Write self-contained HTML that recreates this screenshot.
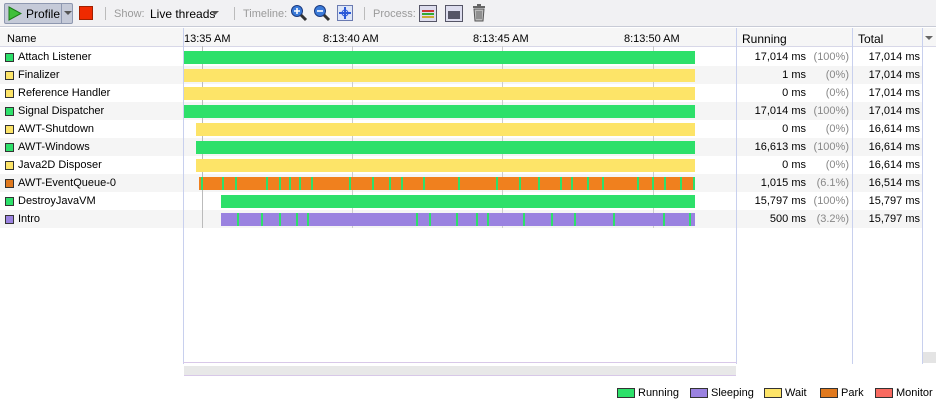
<!DOCTYPE html>
<html><head><style>
*{margin:0;padding:0;box-sizing:border-box}
body{width:936px;height:410px;background:#fff;font-family:"Liberation Sans",sans-serif;font-size:11px;color:#000;position:relative;overflow:hidden}
.a{position:absolute}
.tb{left:0;top:0;width:936px;height:27px;background:#f1f1f3;border-bottom:1px solid #c8cbd6}
.g{color:#9a9a9a}
.sep{width:1px;height:13px;background:#bbb;top:7px}
.row{left:0;width:922px;height:18px}
.alt{background:#f5f5f5}
.sq{width:9px;height:9px;border:1px solid #333;left:5px;top:5px}
.nm{left:18px;top:3px}
.bar{height:13px;top:3px}
.num{top:3px;text-align:right}
.pct{top:3px;text-align:right;color:#888}
.vl{width:1px;background:#c8d0ee}
.lg{top:388px;height:10px;width:18px;border:1px solid #333}
.lt{top:387px;font-size:11px}
</style></head><body>
<div class="a tb"></div>
<div class="a" style="left:4px;top:3px;width:69px;height:21px;border:1px solid #8e98b0;background:#c5cad8;border-radius:2px"></div>
<svg class="a" style="left:8px;top:6px" width="14" height="15"><polygon points="1,1 13,7.5 1,14" fill="#3fc03a" stroke="#1d7a1a"/></svg>
<div class="a" style="left:26px;top:7px;font-size:12px">Profile</div>
<div class="a" style="left:61px;top:4px;width:1px;height:19px;background:#8e98b0"></div>
<div class="a" style="left:64px;top:11px;border:4px solid transparent;border-top:4px solid #555;border-bottom:0"></div>
<div class="a" style="left:79px;top:6px;width:14px;height:14px;background:#f02a00;border:1px solid #a02000"></div>
<div class="a sep" style="left:105px"></div>
<div class="a g" style="left:114px;top:8px">Show:</div>
<div class="a" style="left:150px;top:7px;font-size:12px">Live threads</div>
<div class="a" style="left:211px;top:11px;border:4px solid transparent;border-top:4px solid #555;border-bottom:0"></div>
<div class="a sep" style="left:234px"></div>
<div class="a g" style="left:243px;top:8px">Timeline:</div>
<svg class="a" style="left:290px;top:4px" width="18" height="18"><circle cx="7" cy="7" r="5.5" fill="#3a7ad8" stroke="#1a3a80"/><line x1="11" y1="11" x2="16" y2="16" stroke="#333" stroke-width="3"/><path d="M4 7h6M7 4v6" stroke="#fff" stroke-width="1.6"/></svg>
<svg class="a" style="left:313px;top:4px" width="18" height="18"><circle cx="7" cy="7" r="5.5" fill="#3a7ad8" stroke="#1a3a80"/><line x1="11" y1="11" x2="16" y2="16" stroke="#333" stroke-width="3"/><path d="M4 7h6" stroke="#fff" stroke-width="1.6"/></svg>
<svg class="a" style="left:337px;top:5px" width="16" height="16"><rect x="0.5" y="0.5" width="15" height="15" fill="#dde6f8" stroke="#6a7ab0"/><path d="M8 2v12M2 8h12" stroke="#2a5ad8" stroke-width="2"/><circle cx="8" cy="8" r="3" fill="none" stroke="#2a5ad8"/></svg>
<div class="a sep" style="left:364px"></div>
<div class="a g" style="left:373px;top:8px">Process:</div>
<svg class="a" style="left:419px;top:5px" width="18" height="17"><rect x="0.5" y="0.5" width="17" height="16" fill="#dde" stroke="#556"/><rect x="3" y="5" width="12" height="2" fill="#c33"/><rect x="3" y="8" width="12" height="2" fill="#3a3"/><rect x="3" y="11" width="12" height="2" fill="#ca3"/></svg>
<svg class="a" style="left:445px;top:5px" width="18" height="17"><rect x="0.5" y="0.5" width="17" height="16" fill="#dde" stroke="#556"/><rect x="3" y="6" width="12" height="8" fill="#556"/></svg>
<svg class="a" style="left:472px;top:4px" width="14" height="18"><rect x="1" y="2" width="12" height="2" fill="#666"/><rect x="5" y="0" width="4" height="2" fill="#666"/><path d="M2 5h10l-1 12H3z" fill="#bbb" stroke="#555"/><path d="M5 7v8M7 7v8M9 7v8" stroke="#666"/></svg>

<div class="a" style="left:0;top:28px;width:936px;height:19px;background:#f6f6f6;border-bottom:1px solid #d8d8e8"></div>
<div class="a" style="left:7px;top:33px">Name</div>
<div class="a" style="left:184px;top:33px">13:35 AM</div>
<div class="a" style="left:323px;top:33px">8:13:40 AM</div>
<div class="a" style="left:473px;top:33px">8:13:45 AM</div>
<div class="a" style="left:624px;top:33px">8:13:50 AM</div>
<div class="a" style="left:742px;top:32px;font-size:12px">Running</div>
<div class="a" style="left:858px;top:32px;font-size:12px">Total</div>
<div class="a" style="left:925px;top:36px;border:4px solid transparent;border-top:4px solid #666;border-bottom:0"></div>

<div class="a alt" style="left:0;top:66px;width:922px;height:18px"></div>
<div class="a alt" style="left:0;top:102px;width:922px;height:18px"></div>
<div class="a alt" style="left:0;top:138px;width:922px;height:18px"></div>
<div class="a alt" style="left:0;top:174px;width:922px;height:18px"></div>
<div class="a alt" style="left:0;top:210px;width:922px;height:18px"></div>

<div class="a vl" style="left:183px;top:28px;height:336px"></div>
<div class="a vl" style="left:736px;top:28px;height:336px"></div>
<div class="a vl" style="left:852px;top:28px;height:336px"></div>
<div class="a vl" style="left:922px;top:28px;height:336px"></div>
<div class="a" style="left:183px;top:362px;width:554px;height:1px;background:#d8c8e8"></div>
<div class="a" style="left:202px;top:46px;width:1px;height:182px;background:#bbb"></div>
<div class="a" style="left:352px;top:46px;width:1px;height:182px;background:#ccc"></div>
<div class="a" style="left:502px;top:46px;width:1px;height:182px;background:#ccc"></div>
<div class="a" style="left:653px;top:46px;width:1px;height:182px;background:#ccc"></div>
<div class="a" style="left:184px;top:366px;width:552px;height:10px;background:#e8e8e8;border-bottom:1px solid #d8c8e8"></div>
<div class="a" style="left:923px;top:352px;width:13px;height:11px;background:#e4e4e4"></div>

<div id="rows"></div>
<script>
var R=[["Attach Listener","#2de06a",184,"#2de06a","17,014 ms","(100%)","17,014 ms"],
["Finalizer","#fde468",184,"#fde468","1 ms","(0%)","17,014 ms"],
["Reference Handler","#fde468",184,"#fde468","0 ms","(0%)","17,014 ms"],
["Signal Dispatcher","#2de06a",184,"#2de06a","17,014 ms","(100%)","17,014 ms"],
["AWT-Shutdown","#fde468",196,"#fde468","0 ms","(0%)","16,614 ms"],
["AWT-Windows","#2de06a",196,"#2de06a","16,613 ms","(100%)","16,614 ms"],
["Java2D Disposer","#fde468",196,"#fde468","0 ms","(0%)","16,614 ms"],
["AWT-EventQueue-0","#e0791e",199,"#f0801e","1,015 ms","(6.1%)","16,514 ms"],
["DestroyJavaVM","#2de06a",221,"#2de06a","15,797 ms","(100%)","15,797 ms"],
["Intro","#9a82e0",221,"#9a82e0","500 ms","(3.2%)","15,797 ms"]];
var h="";
R.forEach(function(r,i){var t=48+i*18;
h+='<div class="a row" style="top:'+t+'px">'+
'<div class="a sq" style="background:'+r[1]+'"></div><div class="a nm">'+r[0]+'</div>'+
'<div class="a bar" style="left:'+r[2]+'px;width:'+(695-r[2])+'px;background:'+r[3]+'"></div>'+
'<div class="a num" style="left:740px;width:66px">'+r[4]+'</div>'+
'<div class="a pct" style="left:806px;width:43px">'+r[5]+'</div>'+
'<div class="a num" style="left:853px;width:67px">'+r[6]+'</div></div>';});
var s="";
[[7,[201,222,235,266,279,289,299,311,349,372,389,401,423,458,496,519,538,560,571,587,602,637,652,664,680,693]],[9,[237,261,279,296,307,416,429,456,476,487,523,551,574,613,663,689]]].forEach(function(p){
p[1].forEach(function(x){s+='<div class="a" style="left:'+x+'px;top:'+(48+p[0]*18+3)+'px;width:2px;height:13px;background:#2de06a"></div>';});});
document.getElementById("rows").innerHTML=h+s;
</script>

<div class="a lg" style="left:617px;background:#2de06a"></div><div class="a lt" style="left:638px">Running</div>
<div class="a lg" style="left:690px;background:#9a82e0"></div><div class="a lt" style="left:711px">Sleeping</div>
<div class="a lg" style="left:764px;background:#fde468"></div><div class="a lt" style="left:785px">Wait</div>
<div class="a lg" style="left:820px;background:#e0791e"></div><div class="a lt" style="left:841px">Park</div>
<div class="a lg" style="left:875px;background:#f86a60"></div><div class="a lt" style="left:896px">Monitor</div>
</body></html>
